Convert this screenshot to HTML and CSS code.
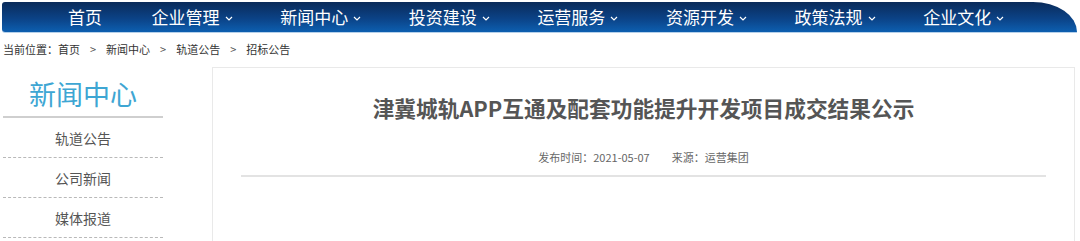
FILE: index.html
```html
<!DOCTYPE html>
<html lang="zh-CN">
<head>
<meta charset="utf-8">
<title>津冀城轨APP互通及配套功能提升开发项目成交结果公示</title>
<link rel="stylesheet" href="styles.css">
</head>
<body>
<nav class="nav">
  <a class="nav-item nav-home">首页</a>
  <a class="nav-item">企业管理<svg class="chev" viewBox="0 0 8 5"><path d="M1 1l3 3 3-3"/></svg></a>
  <a class="nav-item">新闻中心<svg class="chev" viewBox="0 0 8 5"><path d="M1 1l3 3 3-3"/></svg></a>
  <a class="nav-item">投资建设<svg class="chev" viewBox="0 0 8 5"><path d="M1 1l3 3 3-3"/></svg></a>
  <a class="nav-item">运营服务<svg class="chev" viewBox="0 0 8 5"><path d="M1 1l3 3 3-3"/></svg></a>
  <a class="nav-item">资源开发<svg class="chev" viewBox="0 0 8 5"><path d="M1 1l3 3 3-3"/></svg></a>
  <a class="nav-item">政策法规<svg class="chev" viewBox="0 0 8 5"><path d="M1 1l3 3 3-3"/></svg></a>
  <a class="nav-item">企业文化<svg class="chev" viewBox="0 0 8 5"><path d="M1 1l3 3 3-3"/></svg></a>
</nav>
<div class="crumbs">当前位置：首页<span class="sep">&gt;</span>新闻中心<span class="sep">&gt;</span>轨道公告<span class="sep">&gt;</span>招标公告</div>
<div class="content">
  <aside class="side">
    <h2 class="side-title">新闻中心</h2>
    <ul class="side-list">
      <li>轨道公告</li>
      <li>公司新闻</li>
      <li>媒体报道</li>
    </ul>
  </aside>
  <main class="article">
    <h1 class="article-title">津冀城轨APP互通及配套功能提升开发项目成交结果公示</h1>
    <div class="meta"><span>发布时间：2021-05-07</span><span>来源：运营集团</span></div>
    <hr class="rule">
  </main>
</div>
</body>
</html>
```
FILE: styles.css
```css
html, body {
  margin: 0;
  padding: 0;
  background: #fff;
}
body {
  width: 1080px;
  height: 241px;
  overflow: hidden;
  font-family: "Noto Sans CJK SC", "Noto Sans", sans-serif;
  color: #333;
}
.nav {
  margin: 2px 3px 0 2px;
  height: 30px;
  display: flex;
  align-items: center;
  gap: 47.6px;
  padding-left: 66px;
  background: linear-gradient(#0a2b5a 0%, #0b4286 55%, #0d5fb0 100%);
  border-radius: 3px 44px 0 3px / 3px 30px 0 3px;
  box-shadow: 0 1px 0 #b5d0ea;
}
.nav-item {
  color: #fff;
  font-size: 17px;
  line-height: 30px;
  display: flex;
  align-items: center;
  white-space: nowrap;
}
.nav-home {
  margin-right: 2px;
}
.chev {
  width: 8px;
  height: 5px;
  margin-left: 5px;
  margin-top: 3px;
  fill: none;
  stroke: #fff;
  stroke-width: 1.2;
}
.crumbs {
  margin: 8px 0 0 3px;
  font-size: 11px;
  line-height: 18px;
  color: #333;
}
.sep {
  margin: 0 10px;
  color: #555;
}
.content {
  display: flex;
  margin-top: 9px;
  padding-left: 3px;
  gap: 49px;
}
.side {
  width: 160px;
  flex: none;
}
.side-title {
  margin: 0;
  padding: 9px 0 4px;
  font-size: 27px;
  line-height: 36px;
  font-weight: normal;
  text-align: center;
  color: #3ea6d3;
  border-bottom: 2px solid #cfcfcf;
}
.side-list {
  list-style: none;
  margin: 0;
  padding: 0;
}
.side-list li {
  height: 39px;
  line-height: 40px;
  text-align: center;
  font-size: 14px;
  color: #555;
  border-bottom: 1px dashed #b9b9b9;
}
.article {
  width: 861px;
  height: 180px;
  border: 1px solid #e9e9e9;
  border-bottom: none;
  text-align: center;
}
.article-title {
  margin: 25px 0 0;
  font-size: 21.7px;
  line-height: 30px;
  font-weight: bold;
  color: #555;
}
.meta {
  margin-top: 24px;
  font-size: 11px;
  line-height: 20px;
  color: #666;
  display: flex;
  justify-content: center;
  gap: 22px;
}
.rule {
  margin: 8px 28px 0;
  height: 0;
  border: none;
  border-top: 2px solid #e3e3e3;
}
```
